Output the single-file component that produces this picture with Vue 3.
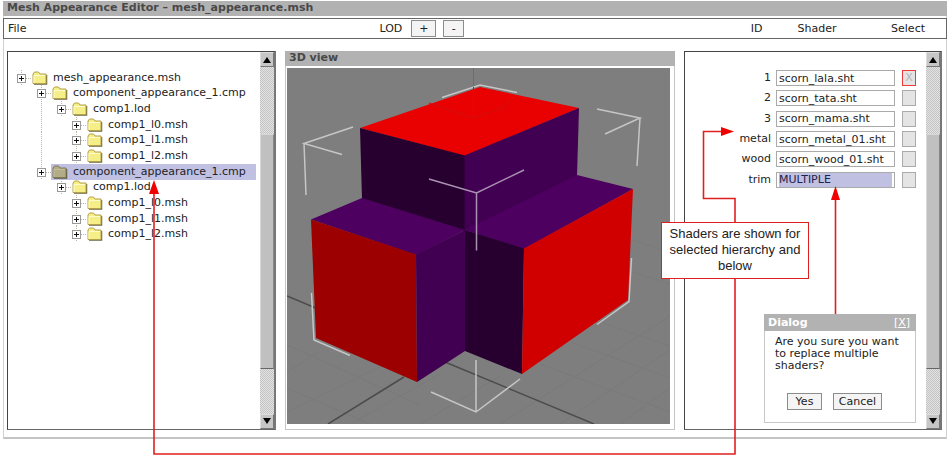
<script setup>
import { ref } from 'vue'

const tree = [
  { label: 'mesh_appearance.msh', level: 0 },
  { label: 'component_appearance_1.cmp', level: 1 },
  { label: 'comp1.lod', level: 2, guide: true },
  { label: 'comp1_l0.msh', level: 3, guide: true },
  { label: 'comp1_l1.msh', level: 3, guide: true },
  { label: 'comp1_l2.msh', level: 3, guide: true },
  { label: 'component_appearance_1.cmp', level: 1, selected: true },
  { label: 'comp1.lod', level: 2 },
  { label: 'comp1_l0.msh', level: 3 },
  { label: 'comp1_l1.msh', level: 3 },
  { label: 'comp1_l2.msh', level: 3 }
]

const shaders = ref([
  { id: '1', name: 'scorn_lala.sht', checked: true },
  { id: '2', name: 'scorn_tata.sht', checked: false },
  { id: '3', name: 'scorn_mama.sht', checked: false },
  { id: 'metal', name: 'scorn_metal_01.sht', checked: false },
  { id: 'wood', name: 'scorn_wood_01.sht', checked: false },
  { id: 'trim', name: 'MULTIPLE', checked: false, multiple: true }
])
</script>

<template>
  <div class="stage">
    <main class="window">
      <h1 class="titlebar">Mesh Appearance Editor – mesh_appearance.msh</h1>
      <nav class="menu">
        <div class="menu-file"><button class="plain" type="button">File</button></div>
        <div class="menu-lod">
          <span>LOD</span>
          <button class="btn lod-plus" type="button">+</button>
          <button class="btn lod-minus" type="button">-</button>
        </div>
        <div class="menu-cols">
          <span class="col-id">ID</span>
          <span class="col-shader">Shader</span>
          <span class="col-select">Select</span>
        </div>
      </nav>

      <div class="panels">
        <section class="panel">
          <ul class="tree">
            <li v-for="(n, i) in tree" :key="i" class="node">
              <span v-if="n.level > 0" class="indent"></span>
              <span v-if="n.level > 1" class="indent" :class="{ guide: n.guide }"></span>
              <span v-if="n.level > 2" class="indent short"></span>
              <svg class="toggle" width="14" height="16" viewBox="0 0 14 16">
                <path d="M4.500 0V16M9 8.500H14" stroke="#bbb6a6" stroke-dasharray="1 1" />
                <rect x="0.500" y="4.500" width="8" height="8" fill="#fff" stroke="#999" />
                <path d="M2 8.500H7M4.500 6V11" stroke="#111" />
              </svg>
              <span class="entry" :class="{ selected: n.selected }">
                <svg class="folder" width="16" height="14" viewBox="0 0 16 14">
                  <path class="folder-edge" d="M2 13H14.500V4" fill="none" stroke-width="1.500" />
                  <path class="folder-body" d="M1 12.500V3L2.500 1H6.500L8 3H14V12.500Z" />
                  <path class="folder-shine" d="M2 12V4.500H13" fill="none" />
                </svg>
                <span class="label">{{ n.label }}</span>
              </span>
            </li>
          </ul>
          <div class="scrollbar">
            <button class="arrow" type="button" aria-label="Scroll up">
              <svg width="8" height="6" viewBox="0 0 8 6"><path d="M4 0L8 6H0Z" /></svg>
            </button>
            <div class="track before"></div>
            <div class="thumb"></div>
            <div class="track after"></div>
            <button class="arrow" type="button" aria-label="Scroll down">
              <svg width="8" height="6" viewBox="0 0 8 6"><path d="M0 0H8L4 6Z" /></svg>
            </button>
          </div>
        </section>

        <section class="view">
          <h2 class="view-title">3D view</h2>
          <div class="view-body">
            <svg class="scene" viewBox="287 68 383 356">
              <rect x="287" y="68" width="383" height="356" fill="#7e7e7e" />
              <g stroke="#7a7a7a" fill="none">
                <path d="M287 345L420 405M287 388L370 424M287 372L318 352M287 412L390 362M350 424L440 374M420 424L500 376M500 424L670 316M560 424L670 350M620 424L670 388M540 364L670 412M570 342L670 378M600 322L670 346M633 272L670 284M633 240L670 252" />
              </g>
              <g stroke="#4c4c4c" stroke-width="1.500" fill="none">
                <path d="M287 296L318 309M445 362L594 424M404 377L328 424" />
              </g>
              <path d="M473.500 68V90" stroke="#6d6d6d" />
              <g stroke="#c6c6c6" stroke-width="1.500" fill="none">
                <path d="M353 127L304 143.500L342 154.500M304 143.500L306 195" />
                <path d="M442 97.500L480 85L517 92.500" />
                <path d="M597 109L640 118L605 134M640 118L637 166" />
                <path d="M311.500 293L314 340L350 355.500" />
                <path d="M631.500 258L629 301.500L597 324.500" />
                <path d="M476 360V412M431 392L476 412L520 379" />
              </g>
              <polygon points="360,128 480,87 579,108 465,156" fill="#e90000" />
              <polygon points="360,128 465,155.500 465,231 362,199" fill="#27002f" />
              <polygon points="464.500,155.500 579,108 577,176 464.500,231" fill="#410052" />
              <polygon points="311,219.500 362,198 465,230 416,255" fill="#4d005f" />
              <polygon points="464.500,230 577,175 633,189 524,249" fill="#4d005f" />
              <polygon points="311,219.500 416,254.500 417,382 316,338" fill="#9c0000" />
              <polygon points="416,254.500 465,230 465,351 417,382" fill="#410052" />
              <polygon points="465,230 524,248.500 522,374 465,351" fill="#27002f" />
              <polygon points="524,248.500 633,189 628,300 522,374" fill="#d10000" />
              <path d="M473.500 87V118M429 103L473 118L505 107Q511 103 509 99" fill="none" stroke="#cf1010" />
              <path d="M429 179L476.500 193L524 170M476.500 193V250.500" fill="none" stroke="#aa92b3" stroke-width="1.500" />
            </svg>
          </div>
        </section>

        <section class="panel right">
          <div class="shader-area">
            <div class="shaders">
              <div v-for="s in shaders" :key="s.id" class="shader">
                <label :for="'shader-' + s.id">{{ s.id }}</label>
                <input
                  :id="'shader-' + s.id"
                  v-model="s.name"
                  class="field"
                  :class="{ multiple: s.multiple }"
                  type="text"
                />
                <input v-model="s.checked" class="check" type="checkbox" :aria-label="'Select ' + s.id" />
              </div>
            </div>
            <div class="dialog" role="dialog" aria-labelledby="dialog-title">
              <header class="dialog-head">
                <h2 id="dialog-title">Dialog</h2>
                <button class="close" type="button">[X]</button>
              </header>
              <p>Are you sure you want to replace multiple shaders?</p>
              <div class="dialog-actions">
                <button class="btn yes" type="button">Yes</button>
                <button class="btn cancel" type="button">Cancel</button>
              </div>
            </div>
          </div>
          <div class="scrollbar">
            <button class="arrow" type="button" aria-label="Scroll up">
              <svg width="8" height="6" viewBox="0 0 8 6"><path d="M4 0L8 6H0Z" /></svg>
            </button>
            <div class="track before"></div>
            <div class="thumb"></div>
            <div class="track after"></div>
            <button class="arrow" type="button" aria-label="Scroll down">
              <svg width="8" height="6" viewBox="0 0 8 6"><path d="M0 0H8L4 6Z" /></svg>
            </button>
          </div>
        </section>
      </div>
    </main>

    <svg class="connectors" viewBox="0 0 949 458" preserveAspectRatio="none">
      <g fill="none" stroke="#e02020" stroke-width="1.600">
        <path d="M722 131.500H703.500V198.500H735V454H154V192" />
        <path d="M835.500 314V200" />
      </g>
      <g fill="#f00000">
        <polygon points="734,131.500 721,127 721,136" />
        <polygon points="154,180 149,194 159,194" />
        <polygon points="835.500,186 831,200 840,200" />
      </g>
    </svg>
    <p class="callout">Shaders are shown for selected hierarchy and below</p>
  </div>
</template>

<style>
body {
  margin: 0;
  background: #fff;
}
</style>

<style scoped>
* {
  box-sizing: border-box;
}

.stage {
  position: relative;
  padding: 1px 2px 19px 3px;
  font-family: Verdana, 'DejaVu Sans', sans-serif;
  font-size: 11px;
  line-height: 14px;
  color: #222;
}

h1,
h2,
p,
ul {
  margin: 0;
  padding: 0;
}

button,
input {
  margin: 0;
  padding: 0;
  font: inherit;
  color: inherit;
}

.window {
  border: 1px solid #d2d2d2;
  border-top: 0;
  border-bottom: 2px solid #c4c4c4;
}

.titlebar {
  margin: 0 -1px;
  padding: 0 4px;
  height: 15px;
  background: #b2b2b2;
  color: #484848;
  font-size: 11px;
  line-height: 14px;
}

.menu {
  display: grid;
  grid-template-columns: 373fr 373fr 193fr;
  align-items: center;
  height: 21px;
  margin: 2px -1px 0;
  padding: 0 3px 0 4px;
  border: 1px solid #666;
}

.plain {
  border: 0;
  background: none;
}

.menu-file,
.menu-lod,
.menu-cols {
  display: flex;
  align-items: center;
}

.btn {
  height: 17px;
  border: 1px solid #8c8c8c;
  background: #f4f4f4;
  line-height: 14px;
}

.lod-plus {
  width: 25px;
  margin-left: 9px;
}

.lod-minus {
  width: 21px;
  margin-left: 7px;
}

.col-shader {
  margin-left: 35px;
}

.col-select {
  margin: 0 18px 0 auto;
}

.panels {
  display: grid;
  grid-template-columns: 269fr 390fr 258fr;
  gap: 9px;
  padding: 12px 4px 7px 3px;
}

.panel {
  display: flex;
  border: 1px solid #444;
  border-right: 2px solid #777;
  border-bottom-color: #666;
}

.tree {
  flex: 1;
  display: grid;
  grid-template-rows: repeat(11, minmax(0, 1fr));
  height: 172px;
  margin-top: 18px;
  padding: 0 4px 0 9px;
  list-style: none;
}

.node {
  display: flex;
  align-items: center;
}

.indent {
  flex: none;
  width: 20px;
  height: 16px;
}

.indent.short {
  width: 15px;
}

.indent.guide {
  background: repeating-linear-gradient(#bbb6a6 0 1px, transparent 1px 2px) 4px 0 / 1px 100% no-repeat;
}

.toggle {
  flex: none;
}

.entry {
  flex: 1;
  display: flex;
  align-items: center;
  gap: 5px;
  height: 16px;
  padding-left: 1px;
}

.selected {
  background: #c0c0e2;
}

.label {
  white-space: nowrap;
}

.folder-edge {
  stroke: #6b6640;
}

.folder-body {
  fill: #f6ee86;
  stroke: #b3a04a;
}

.folder-shine {
  stroke: #fffbd0;
}

.selected .folder-edge {
  stroke: #5c5846;
}

.selected .folder-body {
  fill: #b2ac87;
  stroke: #807950;
}

.selected .folder-shine {
  stroke: #c4bea0;
}

.scrollbar {
  flex: none;
  display: flex;
  flex-direction: column;
  width: 14px;
}

.arrow {
  display: flex;
  align-items: center;
  justify-content: center;
  height: 15px;
  border: 1px solid #dedede;
  border-right-color: #777;
  border-bottom-color: #777;
  background: #c6c6c6;
}

.track {
  background: repeating-conic-gradient(#c4c4c4 0 25%, #e2e2e2 0 50%) 0 0 / 2px 2px;
}

.before {
  flex: 68;
}

.thumb {
  flex: 235;
  border: 1px solid #d8d8d8;
  border-right-color: #888;
  border-bottom-color: #666;
  background: #c0c0c0;
}

.after {
  flex: 45;
}

.view {
  border: 1px solid #c4c4c4;
  border-top: 0;
}

.view-title {
  height: 15px;
  margin: 0 -1px;
  padding-left: 4px;
  background: #b2b2b2;
  color: #484848;
  font-size: 11px;
  line-height: 14px;
}

.view-body {
  padding: 2px 4px 5px 1px;
}

.scene {
  display: block;
  width: 100%;
}

.shader-area {
  flex: 1;
  position: relative;
  padding: 16px 10px 0 0;
}

.shaders {
  display: grid;
  grid-auto-rows: 1fr;
  height: 122px;
}

.shader {
  display: flex;
  align-items: center;
  justify-content: flex-end;
}

.field {
  width: 119px;
  height: 16px;
  margin: 0 7px 0 5px;
  padding: 0 2px;
  border: 1px solid #aaa;
  background: #fff;
  outline: 0;
}

.multiple {
  background: #c0c0e2 content-box;
  color: #22224a;
}

.check {
  display: grid;
  place-items: center;
  appearance: none;
  width: 14px;
  height: 16px;
  border: 1px solid #aaa;
  background: #e4e4e4;
}

.check:checked {
  border-color: #ee3a3a;
}

.check:checked::before {
  content: 'X';
  color: #b4b4b4;
  line-height: 14px;
}

.dialog {
  position: absolute;
  right: 10px;
  bottom: 6px;
  width: 152px;
  border: 1px solid #c8c8c8;
  background: #fff;
}

.dialog-head {
  display: flex;
  align-items: center;
  justify-content: space-between;
  height: 17px;
  margin: -1px -1px 0;
  padding: 0 6px 0 4px;
  background: #b2b2b2;
  color: #fff;
}

.dialog-head h2 {
  font-size: 11px;
}

.close {
  border: 0;
  background: none;
  text-decoration: underline;
}

.dialog p {
  padding: 5px 9px 0 10px;
  line-height: 12px;
}

.dialog-actions {
  display: flex;
  gap: 11px;
  padding: 21px 0 12px 22px;
}

.yes {
  width: 35px;
}

.cancel {
  width: 49px;
}

.connectors {
  position: absolute;
  inset: 0;
  width: 100%;
  height: 100%;
  pointer-events: none;
}

.callout {
  position: absolute;
  top: 222px;
  right: 140px;
  width: 148px;
  padding: 3px 5px 4px;
  border: 1px solid #e02020;
  background: #fff;
  color: #222;
  font-family: 'Liberation Sans', Arial, sans-serif;
  font-size: 13px;
  line-height: 16px;
  text-align: center;
}
</style>
